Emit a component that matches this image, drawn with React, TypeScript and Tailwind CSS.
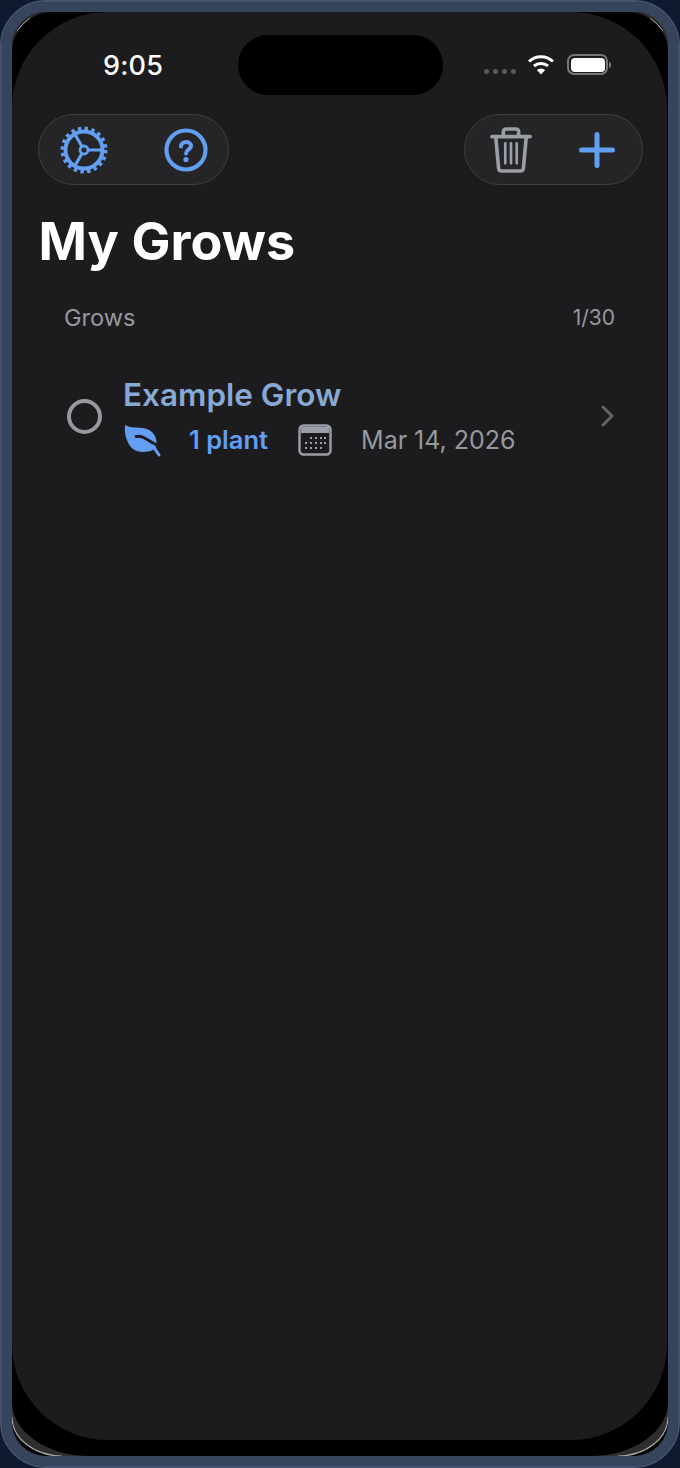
export default function App() {
  const blue = "#629ef2";
  return (
    <div className="h-[1468px] w-[680px] overflow-hidden bg-[#0f1a30] font-['Inter',sans-serif]">
      <div className="h-[1468px] w-[680px] rounded-[46px] border-2 border-[#45526e]">
        <div className="relative h-[1464px] w-[676px] overflow-hidden rounded-[44px] border-[10px] border-[#36445c] bg-black">
          <svg className="absolute left-0 top-0" width="656" height="1444" viewBox="0 0 656 1444" fill="none">
            <path d="M0 40A40 40 0 0 1 40 0H0Z" fill="#2e2e2e" />
            <path d="M656 40A40 40 0 0 0 616 0H656Z" fill="#2e2e2e" />
            <path d="M5 19Q10 12 18 6" stroke="#a8a8a8" strokeWidth="1" />
            <path d="M651 19Q646 12 638 6" stroke="#a8a8a8" strokeWidth="1" />
            <path d="M0 1390A78 54 0 0 0 78 1444H50A50 39 0 0 1 0 1405Z" fill="#2e2e2e" />
            <path d="M656 1390A78 54 0 0 1 578 1444H606A50 39 0 0 0 656 1405Z" fill="#2e2e2e" />
            <path d="M0 1405A50 39 0 0 0 50 1444" stroke="#b0b0b0" strokeWidth="1.2" />
            <path d="M656 1405A50 39 0 0 1 606 1444" stroke="#b0b0b0" strokeWidth="1.2" />
          </svg>

          <div className="relative h-[1428px] w-[655px] rounded-[96px] bg-[#1c1c1e] text-white">
            <div className="absolute left-[226px] top-[23px] h-[60px] w-[205px] rounded-full bg-black" />

            <div className="flex h-[102px] items-start justify-between pl-[91px] pr-[56px] pt-[36px]">
              <span className="text-[27px] font-medium leading-9 tracking-[0.2px]">9:05</span>
              <div className="flex items-center pt-[6px]">
                <div className="mt-[14px] flex gap-[3.5px]">
                  <span className="h-[5.500px] w-[5.500px] rounded-full bg-[#5a5a5c]" />
                  <span className="h-[5.500px] w-[5.500px] rounded-full bg-[#5a5a5c]" />
                  <span className="h-[5.500px] w-[5.500px] rounded-full bg-[#5a5a5c]" />
                  <span className="h-[5.500px] w-[5.500px] rounded-full bg-[#5a5a5c]" />
                </div>
                <svg className="ml-[11px]" width="28" height="21" viewBox="0 0 28 21" fill="none" stroke="#fff" strokeLinecap="butt">
                  <path d="M2 7.5C9 1 19 1 26 7.5" strokeWidth="3" />
                  <path d="M7 12C11 8.5 17 8.5 21 12" strokeWidth="3" />
                  <path d="M14 20.5L9.8 16Q14 13 18.2 16Z" fill="#fff" stroke="none" />
                </svg>
                <div className="ml-[12px] flex items-center">
                  <div className="h-[21px] w-[41px] rounded-[7px] border-2 border-[#77777a] p-[1.5px]">
                    <div className="h-full w-full rounded-[4px] bg-white" />
                  </div>
                  <div className="ml-[1px] h-[6px] w-[2px] rounded-r-full bg-[#77777a]" />
                </div>
              </div>
            </div>

            <div className="flex items-center justify-between pl-[26px] pr-[24px]">
              <div className="flex h-[71px] w-[191px] items-center rounded-full border border-[#3f3f41] bg-[#252527] pl-[21px]">
                <svg width="48" height="48" viewBox="0 0 48 48" fill="none" stroke={blue}>
                  <circle cx="24" cy="24" r="18.5" strokeWidth="4" />
                  <circle cx="24" cy="24" r="21.5" strokeWidth="4" strokeDasharray="3.4 3.354" />
                  <circle cx="24" cy="24" r="4" strokeWidth="2.8" />
                  <path d="M28 24H42M22 20.5L15 8.5M22 27.5L15 39.5" strokeWidth="3.2" />
                </svg>
                <svg className="ml-[55px]" width="46" height="46" viewBox="0 0 46 46" fill="none" stroke={blue}>
                  <circle cx="23" cy="23" r="19.5" strokeWidth="4.2" />
                  <path d="M18 19.500C18.300 13.500 28 13.700 28 19C28 22.500 23 22.500 23 26.500" strokeWidth="4" strokeLinecap="round" />
                  <circle cx="23" cy="32.500" r="2.600" fill={blue} stroke="none" />
                </svg>
              </div>
              <div className="flex h-[71px] w-[179px] items-center rounded-full border border-[#3f3f41] bg-[#252527] pl-[25px]">
                <svg width="42" height="48" viewBox="0 0 44 50" fill="none" stroke="#9a9ea8" strokeWidth="3.8" strokeLinecap="round" strokeLinejoin="round">
                  <path d="M2 11H42" />
                  <path d="M14 10V6Q14 3 17 3H27Q30 3 30 6V10" />
                  <path d="M6 11L9 44Q9.300 47 12 47H32Q34.700 47 35 44L38 11" />
                  <path d="M16 18V39M22 18V39M28 18V39" strokeWidth="2.8" />
                </svg>
                <svg className="ml-[47px]" width="36" height="36" viewBox="0 0 36 36" fill="none" stroke={blue} strokeWidth="5" strokeLinecap="round">
                  <path d="M18 2.500V33.500M2.500 18H33.500" />
                </svg>
              </div>
            </div>

            <h1 className="mt-[22px] pl-[26.500px] text-[52px] font-bold leading-[70px] tracking-[0.1px]">My Grows</h1>

            <div className="mt-[27px] flex items-center justify-between pl-[52px] pr-[52px] text-[#98989f]">
              <span className="text-[23.500px] leading-7">Grows</span>
              <span className="text-[21px] leading-7">1/30</span>
            </div>

            <div className="mt-[45px] flex items-center pl-[55px] pr-[53px]">
              <div className="mb-[2px] h-[35px] w-[35px] rounded-full border-[4px] border-[#98989d]" />
              <div className="ml-[21px] flex-1">
                <div className="text-[31.500px] font-semibold leading-[36px] text-[#88a8d6]">Example Grow</div>
                <div className="mt-[10px] flex h-[34px] items-center">
                  <svg width="38" height="34" viewBox="0 0 38 34" fill={blue}>
                    <path d="M2 2C10 7 22 2 29 9C34 14 34 20 33 24C32 29 16 31 10 26C4 21 1 11 2 2Z" />
                    <path d="M12 14C18 11 24 17 35 23" stroke="#1c1c1e" strokeWidth="3" fill="none" />
                    <path d="M30 23L36 32" stroke={blue} strokeWidth="3" strokeLinecap="round" fill="none" />
                  </svg>
                  <span className="ml-[28px] text-[25.500px] font-semibold leading-8 text-[#629ef2]">1 plant</span>
                  <svg className="ml-[30px]" width="34" height="32" viewBox="0 0 34 32" fill="none">
                    <rect x="1.500" y="1.500" width="31" height="29" rx="4" stroke="#9a9ea8" strokeWidth="2.400" />
                    <path d="M3 3H31V9H3Z" fill="#9a9ea8" />
                    <g fill="#9a9ea8">
                      <rect x="12" y="13" width="2" height="2" /><rect x="17" y="13" width="2" height="2" /><rect x="22" y="13" width="2" height="2" /><rect x="26" y="13" width="2" height="2" />
                      <rect x="7" y="18" width="2" height="2" /><rect x="12" y="18" width="2" height="2" /><rect x="17" y="18" width="2" height="2" /><rect x="22" y="18" width="2" height="2" /><rect x="26" y="18" width="2" height="2" />
                      <rect x="7" y="23" width="2" height="2" /><rect x="12" y="23" width="2" height="2" /><rect x="17" y="23" width="2" height="2" /><rect x="22" y="23" width="2" height="2" />
                    </g>
                  </svg>
                  <span className="ml-[29px] text-[25px] leading-8 text-[#98989f]">Mar 14, 2026</span>
                </div>
              </div>
              <svg className="mb-[3px]" width="14" height="22" viewBox="0 0 14 22" fill="none" stroke="#636366" strokeWidth="3" strokeLinecap="round" strokeLinejoin="round">
                <path d="M3 2L12 11L3 20" />
              </svg>
            </div>
          </div>
        </div>
      </div>
    </div>
  );
}
